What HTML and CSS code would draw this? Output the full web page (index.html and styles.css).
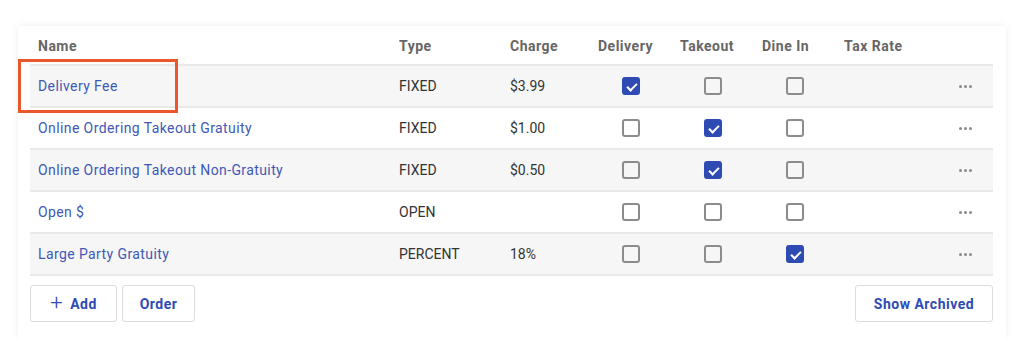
FILE: index.html
```html
<!DOCTYPE html>
<html>
<head>
<meta charset="utf-8">
<link rel="stylesheet" href="styles.css">
</head>
<body>
<div class="card">
  <div class="table">
    <div class="row head">
      <div class="c">Name</div>
      <div class="c">Type</div>
      <div class="c">Charge</div>
      <div class="c">Delivery</div>
      <div class="c">Takeout</div>
      <div class="c">Dine In</div>
      <div class="c">Tax Rate</div>
    </div>
    <div class="row alt">
      <div class="c name">Delivery Fee</div>
      <div class="c">FIXED</div>
      <div class="c">$3.99</div>
      <div class="c cb"><span class="box on"></span></div>
      <div class="c cb"><span class="box"></span></div>
      <div class="c cb"><span class="box"></span></div>
      <div class="c more"><span class="dots"><i></i><i></i><i></i></span></div>
    </div>
    <div class="row">
      <div class="c name">Online Ordering Takeout Gratuity</div>
      <div class="c">FIXED</div>
      <div class="c">$1.00</div>
      <div class="c cb"><span class="box"></span></div>
      <div class="c cb"><span class="box on"></span></div>
      <div class="c cb"><span class="box"></span></div>
      <div class="c more"><span class="dots"><i></i><i></i><i></i></span></div>
    </div>
    <div class="row alt">
      <div class="c name">Online Ordering Takeout Non-Gratuity</div>
      <div class="c">FIXED</div>
      <div class="c">$0.50</div>
      <div class="c cb"><span class="box"></span></div>
      <div class="c cb"><span class="box on"></span></div>
      <div class="c cb"><span class="box"></span></div>
      <div class="c more"><span class="dots"><i></i><i></i><i></i></span></div>
    </div>
    <div class="row">
      <div class="c name">Open $</div>
      <div class="c">OPEN</div>
      <div class="c"></div>
      <div class="c cb"><span class="box"></span></div>
      <div class="c cb"><span class="box"></span></div>
      <div class="c cb"><span class="box"></span></div>
      <div class="c more"><span class="dots"><i></i><i></i><i></i></span></div>
    </div>
    <div class="row alt last">
      <div class="c name">Large Party Gratuity</div>
      <div class="c">PERCENT</div>
      <div class="c">18%</div>
      <div class="c cb"><span class="box"></span></div>
      <div class="c cb"><span class="box"></span></div>
      <div class="c cb"><span class="box on"></span></div>
      <div class="c more"><span class="dots"><i></i><i></i><i></i></span></div>
    </div>
  </div>
  <div class="actions">
    <div class="left">
      <button class="btn add"><span class="plus">+</span>Add</button>
      <button class="btn order">Order</button>
    </div>
    <button class="btn archived">Show Archived</button>
  </div>
  <div class="highlight"></div>
</div>
</body>
</html>
```

FILE: styles.css
```css
* { box-sizing: border-box; }
html, body { margin: 0; padding: 0; background: #fff; }
body {
  font-family: Roboto, "Liberation Sans", sans-serif;
  font-size: 14px;
  color: #333;
  padding: 26px 30px 0 18px;
}
.card {
  position: relative;
  width: 988px;
  height: 312px;
  background: #fff;
  box-shadow: 0 0 8px rgba(0,0,0,0.07);
  padding: 0 13px 0 12px;
}
.table { width: 963px; }
.row {
  display: grid;
  grid-template-columns: 361px 111px 88px 82px 82px 82px 1fr;
  height: 42px;
  align-items: center;
  border-bottom: 2px solid #e9e9e9;
}
.row.head {
  height: 40px;
  font-weight: 700;
  color: #666;
  letter-spacing: 0.5px;
  padding-top: 1px;
}
.row.alt { background: #f6f6f6; }
.c { padding-left: 8px; white-space: nowrap; }
.name { color: #3f58b6; letter-spacing: 0.4px; }
.cb { padding-left: 32px; display: flex; align-items: center; }
.box {
  display: inline-block;
  width: 18px;
  height: 18px;
  border: 2px solid #8c8c8c;
  border-radius: 3px;
  background: transparent;
  position: relative;
}
.box.on {
  background: #2e4bb3;
  border-color: #2e4bb3;
}
.box.on::after {
  content: "";
  position: absolute;
  width: 8px;
  height: 4px;
  border-left: 2px solid #fff;
  border-bottom: 2px solid #fff;
  transform: rotate(-45deg);
  transform-origin: center;
  top: 4px;
  left: 3px;
}
.more { display: flex; justify-content: flex-end; padding-right: 21px; }
.dots { display: flex; gap: 2px; }
.dots i {
  display: block;
  width: 3px;
  height: 3px;
  border-radius: 50%;
  background: #8a8a8a;
}
.actions {
  display: flex;
  justify-content: space-between;
  margin-top: 9px;
}
.left { display: flex; gap: 5px; }
.btn {
  height: 37px;
  border: 1px solid #dcdcdc;
  border-radius: 3px;
  background: #fff;
  color: #2e4bb3;
  font-family: inherit;
  font-size: 14px;
  font-weight: 700;
  letter-spacing: 0.5px;
  display: flex;
  align-items: center;
  justify-content: center;
  padding: 0;
}
.add { width: 87px; }
.order { width: 73px; }
.archived { width: 138px; }
.plus { font-weight: 300; font-size: 22px; margin-right: 7px; line-height: 1; position: relative; top: -1px; }
.highlight {
  position: absolute;
  left: 0;
  top: 33px;
  width: 160px;
  height: 54px;
  border: 3px solid #e8582b;
}
```
